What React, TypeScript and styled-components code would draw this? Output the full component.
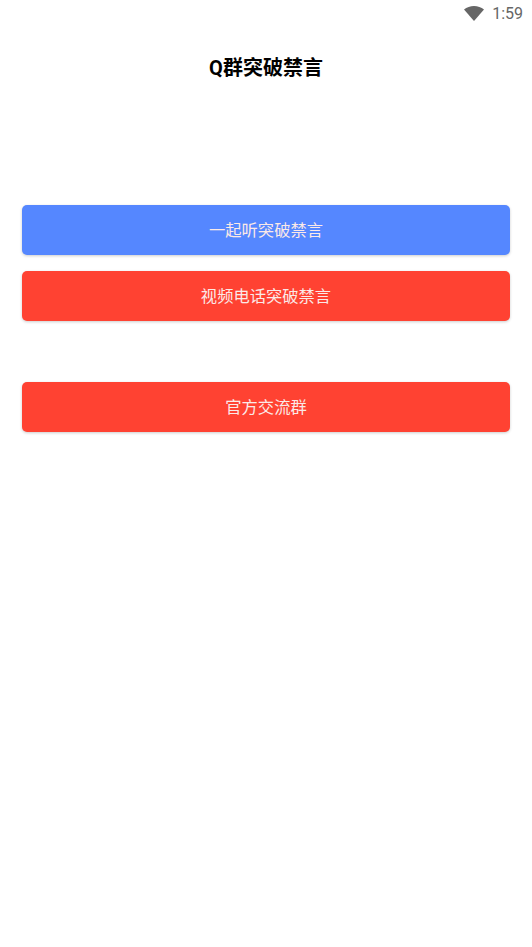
import React from "react";
import styled, { createGlobalStyle } from "styled-components";

const Global = createGlobalStyle`
  html, body { margin: 0; padding: 0; background: #fff; }
  body { font-family: Roboto, "Noto Sans CJK SC", sans-serif; }
`;

const Page = styled.div`
  width: 532px;
  height: 947px;
  background: #fff;
  display: flex;
  flex-direction: column;
  overflow: hidden;
`;

const StatusBar = styled.div`
  height: 27px;
  display: flex;
  align-items: center;
  justify-content: flex-end;
  gap: 8px;
  padding-right: 9px;
  color: #666;
  font-size: 16px;
`;

const Title = styled.h1`
  margin: 0;
  height: 78px;
  display: flex;
  align-items: center;
  justify-content: center;
  font-size: 20px;
  font-weight: 700;
  color: #000;
  font-family: Roboto, "Noto Sans CJK SC", sans-serif;
`;

const Actions = styled.div`
  margin-top: 100px;
  padding: 0 22px;
  display: flex;
  flex-direction: column;
`;

const ActionButton = styled.button<{ $tone: string; $gap: number }>`
  height: 50px;
  margin-bottom: ${(p) => p.$gap}px;
  padding: 0 0 2px;
  border: 0;
  border-radius: 5px;
  background: ${(p) => p.$tone};
  color: #fbe9e7;
  font-family: Roboto, "Noto Sans CJK SC", sans-serif;
  font-size: 16.3px;
  box-shadow: 0 1px 3px rgba(0, 0, 0, 0.2);
`;

export default function App() {
  return (
    <Page>
      <Global />
      <StatusBar>
        <svg width="20" height="15" viewBox="0 0 20 15">
          <path d="M0 3.5C2.8 1.2 6.2 0 10 0s7.2 1.2 10 3.5L10 15z" fill="#666" />
        </svg>
        <span>1:59</span>
      </StatusBar>
      <Title>Q群突破禁言</Title>
      <Actions>
        <ActionButton $tone="#5587ff" $gap={16}>一起听突破禁言</ActionButton>
        <ActionButton $tone="#ff4232" $gap={61}>视频电话突破禁言</ActionButton>
        <ActionButton $tone="#ff4232" $gap={0}>官方交流群</ActionButton>
      </Actions>
    </Page>
  );
}
